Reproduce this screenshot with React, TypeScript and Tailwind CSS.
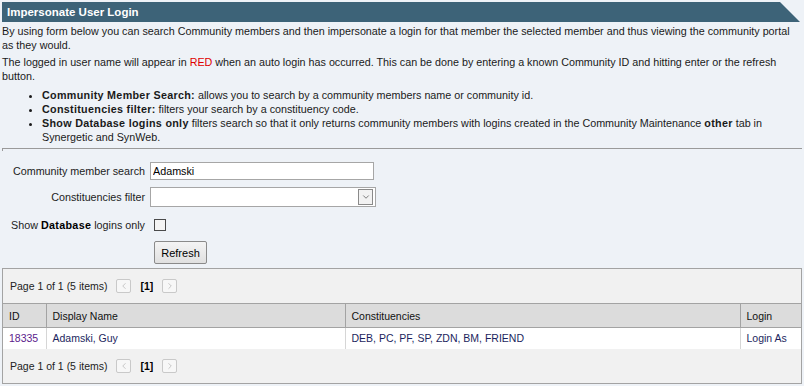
import { ChevronDown, ChevronLeft, ChevronRight } from 'lucide-react';

const Pager = () => (
  <div className="flex h-[34px] items-center pl-[7px] text-[#222]">
    <span>Page 1 of 1 (5 items)</span>
    <span className="ml-[9px] flex h-[14px] w-[15px] items-center justify-center rounded-[2px] border border-[#c9c9c9] bg-[#f7f7f7] text-[#aaa]">
      <ChevronLeft size={10} strokeWidth={1.5} />
    </span>
    <span className="ml-[9px] font-bold text-black">[1]</span>
    <span className="ml-[9px] flex h-[14px] w-[15px] items-center justify-center rounded-[2px] border border-[#c9c9c9] bg-[#f7f7f7] text-[#aaa]">
      <ChevronRight size={10} strokeWidth={1.5} />
    </span>
  </div>
);

export default function App() {
  return (
    <div className="h-[386px] w-[804px] overflow-hidden bg-[#eef2f7] pt-[2px] font-['Liberation_Sans',Arial,sans-serif] text-[10.75px] leading-[14px] text-[#1a1a1a]">
      <div className="ml-[2px] flex h-[20px] w-[798px] items-center bg-[#3d6378] pl-[5px] text-[11.5px] font-bold text-white [clip-path:polygon(0_0,778px_0,100%_100%,0_100%)]">
        Impersonate User Login
      </div>

      <div className="px-[2px]">
        <p className="mt-[2px]">
          By using form below you can search Community members and then impersonate a login for that member the
          selected member and thus viewing the community portal as they would.
        </p>
        <p className="mt-[3px]">
          The logged in user name will appear in <span className="text-[#e00000]">RED</span> when an auto login has
          occurred. This can be done by entering a known Community ID and hitting enter or the refresh button.
        </p>
        <ul className="mt-[5px] list-disc pl-[40px]">
          <li>
            <b className="tracking-[0.3px]">Community Member Search:</b> allows you to search by a community members
            name or community id.
          </li>
          <li>
            <b className="tracking-[0.3px]">Constituencies filter:</b> filters your search by a constituency code.
          </li>
          <li>
            <b className="tracking-[0.3px]">Show Database logins only</b> filters search so that it only returns
            community members with logins created in the Community Maintenance{' '}
            <b className="tracking-[0.3px]">other</b> tab in Synergetic and SynWeb.
          </li>
        </ul>
        <div className="mt-[4px] h-[3px] border-l border-t border-[#9a9a9a]" />
      </div>

      <div className="mt-[11px] grid grid-cols-[145px_auto] items-center gap-x-[5px] text-[#222]">
        <label className="text-right">Community member search</label>
        <input
          readOnly
          value="Adamski"
          className="h-[18px] w-[224px] border border-[#a6a6a6] bg-white px-[2px] text-[10.75px] text-black outline-none"
        />

        <label className="mt-[7px] text-right">Constituencies filter</label>
        <div className="mt-[7px] flex h-[20px] w-[226px] items-center justify-end border border-[#a6a6a6] bg-white pr-[2px]">
          <span className="flex h-[16px] w-[15px] items-center justify-center border border-[#8a8a8a] bg-[#f2f2f2] text-[#666]">
            <ChevronDown size={10} strokeWidth={2} />
          </span>
        </div>

        <label className="mt-[11px] text-right">
          Show <b className="tracking-[0.3px] text-black">Database</b> logins only
        </label>
        <span className="ml-[4px] mt-[11px] block h-[12px] w-[12px] border border-[#4a4a4a] bg-[#f4f4f4]" />

        <span />
        <button className="ml-[4px] mt-[9px] h-[23px] w-[53px] rounded-[2px] border border-[#8a8a8a] bg-gradient-to-b from-[#f4f4f4] to-[#e0e0e0] text-[11px] text-black">
          Refresh
        </button>
      </div>

      <div className="ml-[2px] mt-[4px] w-[800px] border border-[#a3a3a3] bg-[#f1f1f1] text-[10.5px]">
        <Pager />
        <table className="w-full table-fixed border-collapse">
          <colgroup>
            <col className="w-[43px]" />
            <col className="w-[299px]" />
            <col className="w-[395px]" />
            <col />
          </colgroup>
          <thead>
            <tr className="h-[24px] bg-[#dcdcdc] text-left text-[#111]">
              <th className="border-y border-[#a3a3a3] pl-[6px] font-normal">ID</th>
              <th className="border border-[#a3a3a3] pl-[6px] font-normal">Display Name</th>
              <th className="border border-[#a3a3a3] pl-[6px] font-normal">Constituencies</th>
              <th className="border-y border-[#a3a3a3] pl-[6px] font-normal">Login</th>
            </tr>
          </thead>
          <tbody>
            <tr className="h-[21px] bg-white text-[#1c1f5e]">
              <td className="pl-[6px] text-[#5b1a8c]">18335</td>
              <td className="border-x border-[#d6d6d6] pl-[6px]">Adamski, Guy</td>
              <td className="border-x border-[#d6d6d6] pl-[6px]">DEB, PC, PF, SP, ZDN, BM, FRIEND</td>
              <td className="pl-[6px]">Login As</td>
            </tr>
          </tbody>
        </table>
        <Pager />
      </div>
    </div>
  );
}
